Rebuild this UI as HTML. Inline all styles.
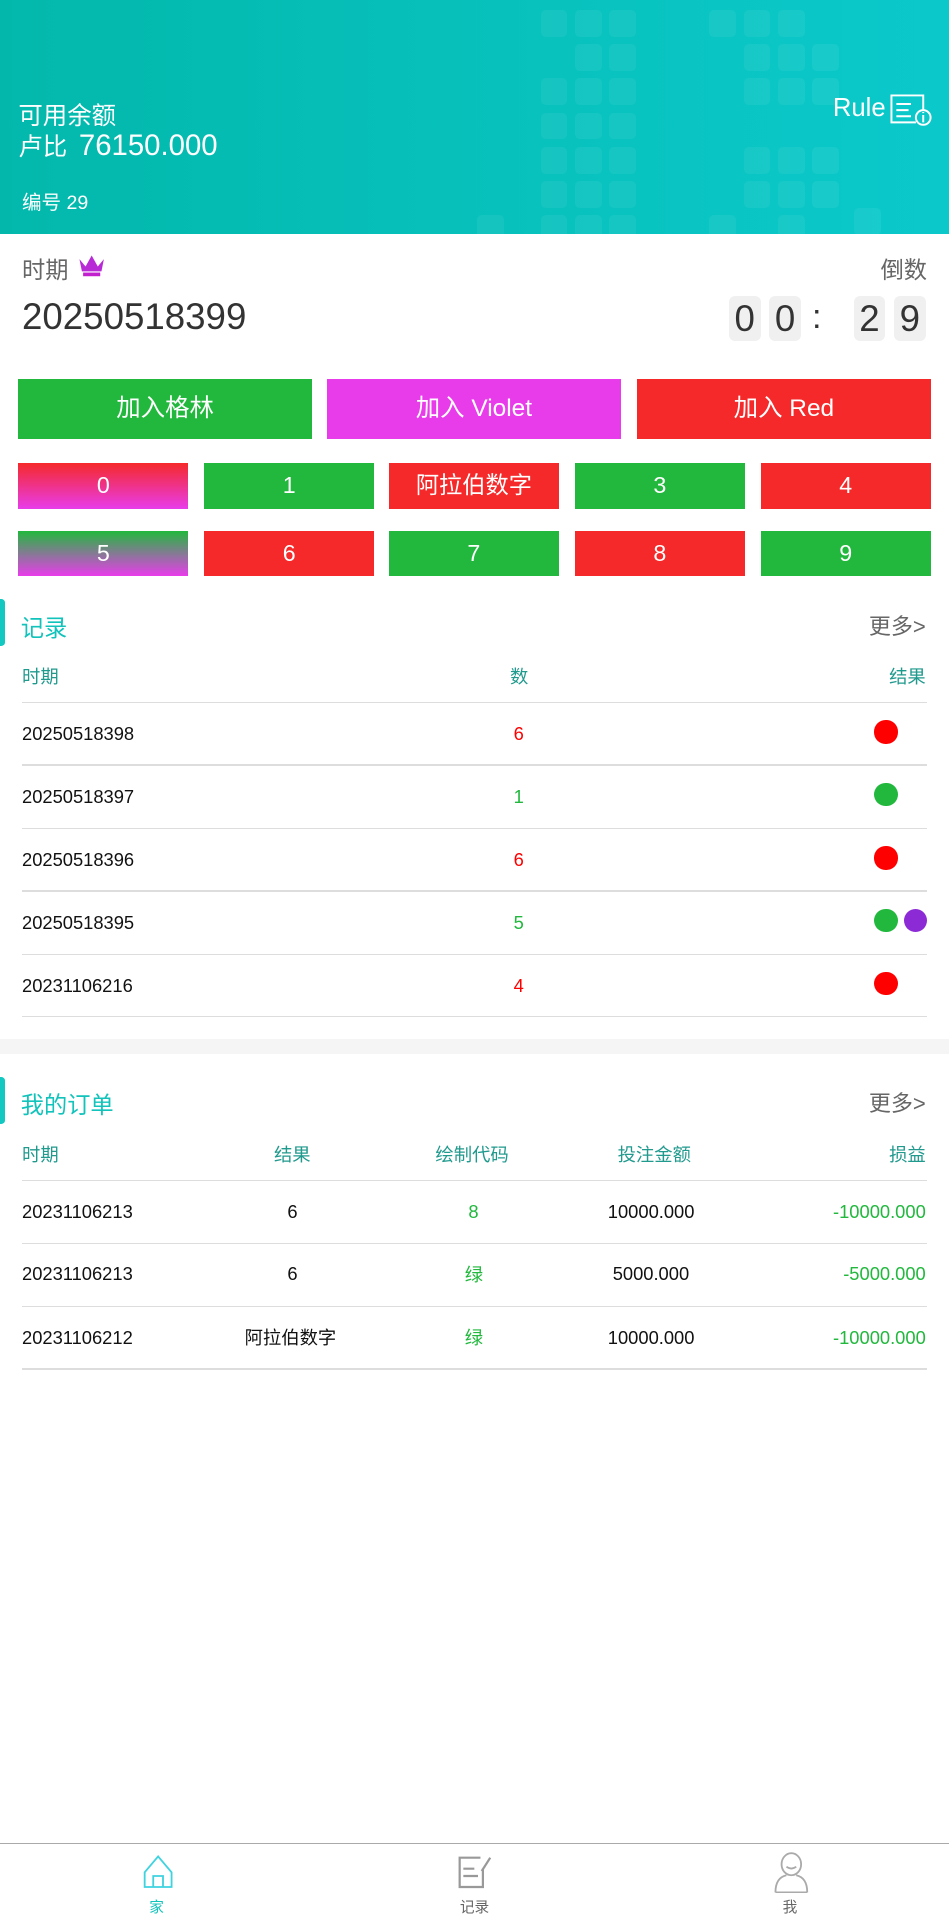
<!DOCTYPE html>
<html><head><meta charset="utf-8"><style>
html{zoom:1.22294}
*{margin:0;padding:0;box-sizing:border-box}
body{width:776px;height:1568px;position:relative;background:#fff;font-family:"Liberation Sans","Noto Sans CJK SC",sans-serif;overflow:hidden;color:#222}
.a{position:absolute;white-space:nowrap}
.hdr{position:absolute;left:0;top:0;width:776px;height:191px;background:linear-gradient(90deg,#03b8ab,#0bc9cb);overflow:hidden}
.sq{position:absolute;width:22px;height:22px;border-radius:4px;background:rgba(255,255,255,.06)}
.tb{position:absolute;top:242px;width:26px;height:37px;background:#f0f0f0;border-radius:5px;font-size:30px;color:#333;text-align:center;line-height:37px}
.btn{position:absolute;color:#fff;text-align:center;font-size:20px}
.g{background:#21b83d}.r{background:#f5292a}.v{background:#e83ceb}
.nb{position:absolute;width:139px;height:37px;color:#fff;text-align:center;line-height:37px;font-size:19px}
.ln{position:absolute;left:18px;width:740px;height:1px;background:#ddd}
.th{position:absolute;font-size:15px;color:#219a8e;white-space:nowrap}
.td{position:absolute;font-size:15px;color:#111;white-space:nowrap}
.dot{position:absolute;width:19px;height:19px;border-radius:50%}
</style></head><body>
<div class="hdr">
<div class="sq" style="left:442px;top:8px"></div><div class="sq" style="left:470px;top:8px"></div><div class="sq" style="left:498px;top:8px"></div>
<div class="sq" style="left:470px;top:36px"></div><div class="sq" style="left:498px;top:36px"></div>
<div class="sq" style="left:442px;top:64px"></div><div class="sq" style="left:470px;top:64px"></div><div class="sq" style="left:498px;top:64px"></div>
<div class="sq" style="left:442px;top:92px"></div><div class="sq" style="left:470px;top:92px"></div><div class="sq" style="left:498px;top:92px"></div>
<div class="sq" style="left:442px;top:120px"></div><div class="sq" style="left:470px;top:120px"></div><div class="sq" style="left:498px;top:120px"></div>
<div class="sq" style="left:442px;top:148px"></div><div class="sq" style="left:470px;top:148px"></div><div class="sq" style="left:498px;top:148px"></div>
<div class="sq" style="left:442px;top:176px"></div><div class="sq" style="left:470px;top:176px"></div><div class="sq" style="left:498px;top:176px"></div><div class="sq" style="left:390px;top:176px"></div>
<div class="sq" style="left:580px;top:8px"></div><div class="sq" style="left:608px;top:8px"></div><div class="sq" style="left:636px;top:8px"></div>
<div class="sq" style="left:608px;top:36px"></div><div class="sq" style="left:636px;top:36px"></div><div class="sq" style="left:664px;top:36px"></div>
<div class="sq" style="left:608px;top:64px"></div><div class="sq" style="left:636px;top:64px"></div><div class="sq" style="left:664px;top:64px"></div>
<div class="sq" style="left:608px;top:120px"></div><div class="sq" style="left:636px;top:120px"></div><div class="sq" style="left:664px;top:120px"></div>
<div class="sq" style="left:608px;top:148px"></div><div class="sq" style="left:636px;top:148px"></div><div class="sq" style="left:664px;top:148px"></div>
<div class="sq" style="left:580px;top:176px"></div><div class="sq" style="left:636px;top:176px"></div><div class="sq" style="left:698px;top:170px"></div>
</div>
<div class="a" style="left:15px;top:79px;font-size:20px;color:#fff">可用余额</div>
<div class="a" style="left:15px;top:105px;font-size:20px;color:#fff">卢比 <span style="font-size:24px;margin-left:4px">76150.000</span></div>
<div class="a" style="left:18px;top:152px;font-size:16px;color:#fff">编号 29</div>
<div class="a" style="left:681px;top:77px;font-size:21px;color:#fff">Rule</div>
<svg class="a" style="left:727px;top:76px" width="36" height="28" viewBox="0 0 36 28" fill="none" stroke="#fff" stroke-width="1.6"><path d="M22 24H2V2h26v12"/><path d="M6 9h12M6 14h10M6 19h12"/><circle cx="28" cy="20" r="6"/><path d="M28 18v6M28 15.5v1"/></svg>

<div class="a" style="left:18px;top:205px;font-size:19px;color:#666">时期</div>
<svg class="a" style="left:63px;top:207px" width="24" height="20" viewBox="0 0 24 20"><path d="M2 5l5 6 5-9 5 9 5-6-2 10H4z" fill="#b82ad6"/><rect x="5" y="16" width="14" height="3" fill="#c21fcf"/></svg>
<div class="a" style="right:18px;top:205px;font-size:19px;color:#666">倒数</div>
<div class="a" style="left:18px;top:242px;font-size:30px;color:#333">20250518399</div>
<div class="tb" style="left:596px">0</div><div class="tb" style="left:629px">0</div>
<div class="a" style="left:664px;top:244px;font-size:28px;color:#333">:</div>
<div class="tb" style="left:698px">2</div><div class="tb" style="left:731px">9</div>

<div class="btn g" style="left:15px;top:310px;width:240px;height:49px;line-height:49px">加入格林</div>
<div class="btn v" style="left:267px;top:310px;width:241px;height:49px;line-height:49px">加入 Violet</div>
<div class="btn r" style="left:521px;top:310px;width:240px;height:49px;line-height:49px">加入 Red</div>

<div class="nb" style="left:15px;top:379px;background:linear-gradient(#f5292a,#e83ceb)">0</div>
<div class="nb g" style="left:167px;top:379px">1</div>
<div class="nb r" style="left:318px;top:379px">阿拉伯数字</div>
<div class="nb g" style="left:470px;top:379px">3</div>
<div class="nb r" style="left:622px;top:379px">4</div>
<div class="nb" style="left:15px;top:434px;background:linear-gradient(#21b83d,#e83ceb)">5</div>
<div class="nb r" style="left:167px;top:434px">6</div>
<div class="nb g" style="left:318px;top:434px">7</div>
<div class="nb r" style="left:470px;top:434px">8</div>
<div class="nb g" style="left:622px;top:434px">9</div>

<div class="a" style="left:0;top:490px;width:4px;height:38px;background:#12c8c0;border-radius:0 3px 3px 0"></div>
<div class="a" style="left:17px;top:498px;font-size:19px;color:#12c3bb">记录</div>
<div class="a" style="right:19px;top:498px;font-size:18px;color:#666">更多&gt;</div>
<div class="th" style="left:18px;top:542px">时期</div>
<div class="th" style="left:417px;top:542px">数</div>
<div class="th" style="right:19px;top:542px">结果</div>
<div class="ln" style="top:574px"></div>

<div class="td" style="left:18px;top:591px">20250518398</div><div class="td" style="left:420px;top:591px;color:#f00">6</div><div class="dot" style="left:715px;top:589px;background:#f00"></div><div class="ln" style="top:625px"></div>
<div class="td" style="left:18px;top:643px">20250518397</div><div class="td" style="left:420px;top:643px;color:#21b83d">1</div><div class="dot" style="left:715px;top:640px;background:#21b83d"></div><div class="ln" style="top:677px"></div>
<div class="td" style="left:18px;top:694px">20250518396</div><div class="td" style="left:420px;top:694px;color:#f00">6</div><div class="dot" style="left:715px;top:692px;background:#f00"></div><div class="ln" style="top:728px"></div>
<div class="td" style="left:18px;top:746px">20250518395</div><div class="td" style="left:420px;top:746px;color:#21b83d">5</div><div class="dot" style="left:715px;top:743px;background:#21b83d"></div><div class="dot" style="left:739px;top:743px;background:#8c2ad6"></div><div class="ln" style="top:780px"></div>
<div class="td" style="left:18px;top:797px">20231106216</div><div class="td" style="left:420px;top:797px;color:#f00">4</div><div class="dot" style="left:715px;top:795px;background:#f00"></div><div class="ln" style="top:831px"></div>

<div class="a" style="left:0;top:850px;width:776px;height:12px;background:#f5f5f5"></div>

<div class="a" style="left:0;top:881px;width:4px;height:38px;background:#12c8c0;border-radius:0 3px 3px 0"></div>
<div class="a" style="left:17px;top:888px;font-size:19px;color:#12c3bb">我的订单</div>
<div class="a" style="right:19px;top:888px;font-size:18px;color:#666">更多&gt;</div>
<div class="th" style="left:18px;top:933px">时期</div>
<div class="th" style="left:224px;top:933px">结果</div>
<div class="th" style="left:356px;top:933px">绘制代码</div>
<div class="th" style="left:505px;top:933px">投注金额</div>
<div class="th" style="right:19px;top:933px">损益</div>
<div class="ln" style="top:965px"></div>

<div class="td" style="left:18px;top:982px">20231106213</div><div class="td" style="left:235px;top:982px">6</div><div class="td" style="left:383px;top:982px;color:#21b83d">8</div><div class="td" style="left:497px;top:982px">10000.000</div><div class="td" style="right:19px;top:982px;color:#21b83d">-10000.000</div><div class="ln" style="top:1016px"></div>
<div class="td" style="left:18px;top:1033px">20231106213</div><div class="td" style="left:235px;top:1033px">6</div><div class="td" style="left:380px;top:1031px;color:#21b83d">绿</div><div class="td" style="left:501px;top:1033px">5000.000</div><div class="td" style="right:19px;top:1033px;color:#21b83d">-5000.000</div><div class="ln" style="top:1068px"></div>
<div class="td" style="left:18px;top:1085px">20231106212</div><div class="td" style="left:200px;top:1083px">阿拉伯数字</div><div class="td" style="left:380px;top:1083px;color:#21b83d">绿</div><div class="td" style="left:497px;top:1085px">10000.000</div><div class="td" style="right:19px;top:1085px;color:#21b83d">-10000.000</div><div class="ln" style="top:1119px"></div>

<div class="a" style="left:0;top:1507px;width:776px;height:1px;background:#aaa"></div>
<svg class="a" style="left:115px;top:1516px" width="28" height="30" viewBox="0 0 28 30" fill="none" stroke="#3fd3e0" stroke-width="1.5"><path d="M14 2L3 15v12h22V15z"/><path d="M10 27v-9h8v9"/></svg>
<div class="a" style="left:122px;top:1550px;font-size:12px;color:#12c3bb">家</div>
<svg class="a" style="left:373px;top:1516px" width="30" height="30" viewBox="0 0 30 30" fill="none" stroke="#999" stroke-width="1.8"><path d="M20 3H3v24h19V12"/><path d="M28 3l-7 11"/><path d="M6 12h9M6 18h12"/></svg>
<div class="a" style="left:376px;top:1550px;font-size:12px;color:#666">记录</div>
<svg class="a" style="left:632px;top:1514px" width="30" height="34" viewBox="0 0 30 34" fill="none" stroke="#aaa" stroke-width="1.5"><ellipse cx="15" cy="10" rx="8" ry="9"/><path d="M11 12q4 3 8 0"/><path d="M2 33q0-12 9-14M28 33q0-12-9-14M2 33h26"/></svg>
<div class="a" style="left:640px;top:1550px;font-size:12px;color:#666">我</div>
</body></html>
